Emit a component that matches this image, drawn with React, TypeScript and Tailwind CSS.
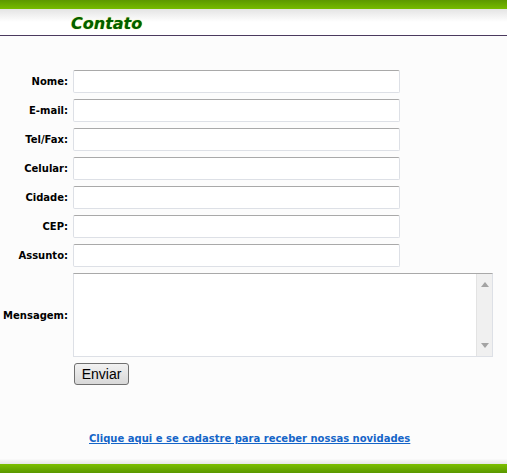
const fields = ["Nome:", "E-mail:", "Tel/Fax:", "Celular:", "Cidade:", "CEP:", "Assunto:"];

function Label({ text }: { text: string }) {
  return (
    <label className="w-[68px] shrink-0 text-right text-[10px] font-bold text-black [font-family:'DejaVu_Sans',Verdana,sans-serif]">
      {text}
    </label>
  );
}

function Scrollbar() {
  return (
    <div className="flex w-[16px] shrink-0 flex-col items-center justify-between border-l border-[#e3e3e3] bg-[#f0f0f0] py-[8px]">
      <svg width="8" height="5" viewBox="0 0 8 5">
        <path d="M0 5 L4 0 L8 5 Z" fill="#a3a3a3" />
      </svg>
      <svg width="8" height="5" viewBox="0 0 8 5">
        <path d="M0 0 L8 0 L4 5 Z" fill="#a3a3a3" />
      </svg>
    </div>
  );
}

export default function App() {
  return (
    <div className="flex h-[473px] w-[507px] flex-col bg-[#fcfcfc] [font-family:'DejaVu_Sans',Verdana,sans-serif]">
      <div className="h-[9px] bg-gradient-to-b from-[#5c9800] to-[#76bc00]" />
      <div className="h-[26px] bg-gradient-to-b from-[#e4e4e4] via-white to-white pl-[71px] pt-[4px]">
        <h1 className="text-[16px] font-bold italic leading-[22px] text-[#005f00] [font-family:'DejaVu_Sans',Verdana,sans-serif] [text-shadow:0_0_1px_#c8d400]">
          Contato
        </h1>
      </div>
      <div className="h-px bg-[#4b3a5e]" />

      <form className="flex flex-col gap-[6px] pt-[34px]">
        {fields.map((f) => (
          <div key={f} className="flex items-center gap-[5px]">
            <Label text={f} />
            <input
              type="text"
              className="h-[23px] w-[327px] rounded-[2px] border border-[#dde0e6] border-t-[#a9a9a9] bg-white"
            />
          </div>
        ))}
        <div className="flex items-center gap-[5px]">
          <Label text="Mensagem:" />
          <div className="flex h-[84px] w-[420px] border border-[#dde0e6] border-t-[#a9a9a9] bg-white">
            <textarea className="flex-1 resize-none outline-none" />
            <Scrollbar />
          </div>
        </div>
        <div className="-mt-[1px] pl-[74px]">
          <button
            type="button"
            className="h-[22px] w-[55px] rounded-[3px] border border-[#707070] bg-gradient-to-b from-[#f2f2f2] to-[#d8d8d8] text-[14px] leading-[18px] text-black [font-family:'Liberation_Sans',Arial,sans-serif]"
          >
            Enviar
          </button>
        </div>
      </form>

      <div className="mt-[39px] pl-[89px]">
        <a href="#" className="text-[10px] font-bold text-[#1565c8] underline">
          Clique aqui e se cadastre para receber nossas novidades
        </a>
      </div>

      <div className="mt-auto h-[5px] bg-gradient-to-b from-[#fafafa] to-[#e6e6e6]" />
      <div className="h-[9px] bg-gradient-to-b from-[#7cc000] to-[#5a9800]" />
    </div>
  );
}
